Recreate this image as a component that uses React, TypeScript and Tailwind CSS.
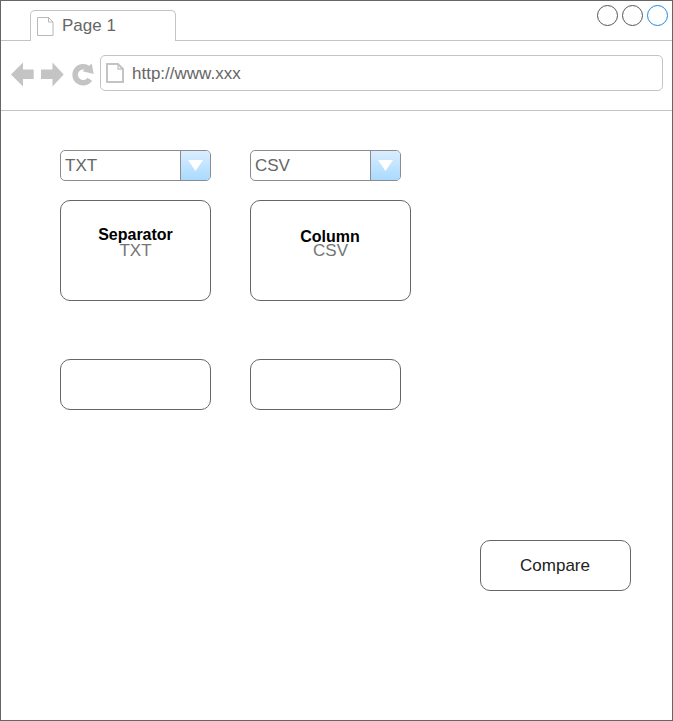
import React from "react";

function PageIcon({ className, thick }: { className: string; thick?: boolean }) {
  return thick ? (
    <svg className={className} viewBox="0 0 18 20" fill="none" stroke="#c4c4c4" strokeWidth="2">
      <path d="M1 1H12L17 6V19H1Z" />
      <path d="M12 1V6H17" strokeWidth="1.3" />
    </svg>
  ) : (
    <svg className={className} viewBox="0 0 17 19" fill="none" stroke="#b8b8b8" strokeWidth="1">
      <path d="M.5 .5H11.5L16 5V18.5H.5Z" />
      <path d="M11.5 .5V5H16" />
    </svg>
  );
}

function Select({ value }: { value: string }) {
  return (
    <div className="flex h-[31px] w-[151px] overflow-hidden rounded-[5px] border border-[#8a8c90]">
      <div className="flex-1 pl-1 text-[17px] leading-[29px] text-[#666666]">{value}</div>
      <div className="flex w-[30px] items-center justify-center border-l border-[#8a8c90] bg-linear-to-b from-[#dbedff] to-[#a9daff]">
        <svg className="h-[11px] w-[15px]" viewBox="0 0 15 11">
          <path d="M0 0H15L7.5 11Z" fill="#fff" />
        </svg>
      </div>
    </div>
  );
}

export default function App() {
  return (
    <div className="flex h-[721px] w-[673px] flex-col border border-[#666666] bg-white font-['Liberation_Sans',Arial,sans-serif] text-[17px]">
      <header className="flex h-10 shrink-0">
        <div className="w-[29px] border-b border-[#c4c4c4]" />
        <div className="mt-[9px] flex w-[146px] rounded-t-[5px] border border-b-0 border-[#c4c4c4] pl-1.5">
          <PageIcon className="mt-1.5 h-[19px] w-[17px]" />
          <span className="ml-2 leading-[29px] text-[#666666]">Page 1</span>
        </div>
        <div className="flex flex-1 justify-end gap-1 border-b border-[#c4c4c4] pt-1 pr-1">
          <div className="size-[21px] rounded-full border border-[#555555]" />
          <div className="size-[21px] rounded-full border border-[#555555]" />
          <div className="size-[21px] rounded-full border border-[#1e88e5]" />
        </div>
      </header>

      <nav className="flex h-[70px] shrink-0 border-b border-[#c4c4c4] pt-[14px] pl-[10px]">
        <svg className="mt-[7px] h-[25px] w-[83px]" viewBox="0 0 83 25" fill="#c4c4c4">
          <path d="M0 12.5L12 .5V7.5H22.7V17H12V24.5Z" />
          <path d="M52.7 12.5L41.5 .5V7.5H30V17H41.5V24.5Z" />
          <path
            d="M78.8 17.2A8 8 0 1 1 77.2 6.6"
            fill="none"
            stroke="#c4c4c4"
            strokeWidth="5.5"
          />
          <path d="M80.7 1.5L82.7 12L71.5 9.3Z" />
        </svg>
        <div className="ml-1.5 flex h-9 w-[563px] rounded-[5px] border border-[#c4c4c4] pl-[5px]">
          <PageIcon thick className="mt-[7px] h-5 w-[18px]" />
          <span className="ml-2 leading-[36px] text-[#666666]">http://www.xxx</span>
        </div>
      </nav>

      <main className="flex flex-1 flex-col pt-[39px] pl-[59px]">
        <div className="flex gap-[39px]">
          <Select value="TXT" />
          <Select value="CSV" />
        </div>

        <div className="mt-[19px] flex gap-[39px] text-center">
          <section className="h-[101px] w-[151px] rounded-[10px] border border-[#666666] pt-[26px]">
            <h2 className="text-[16px] leading-4 font-bold text-black">Separator</h2>
            <p className="leading-4 text-[#757575]">TXT</p>
          </section>
          <section className="h-[101px] w-[161px] rounded-[10px] border border-[#666666] pt-[29px]">
            <h2 className="pr-px text-[16px] leading-[14px] font-bold text-black">Column</h2>
            <p className="leading-[14px] text-[#757575]">CSV</p>
          </section>
        </div>

        <div className="mt-[58px] flex gap-[39px]">
          <div className="h-[51px] w-[151px] rounded-[10px] border border-[#666666]" />
          <div className="h-[51px] w-[151px] rounded-[10px] border border-[#666666]" />
        </div>

        <button className="mt-[130px] mr-[41px] h-[51px] w-[151px] self-end rounded-[10px] border border-[#666666] pr-px text-[#222222]">
          Compare
        </button>
      </main>
    </div>
  );
}
